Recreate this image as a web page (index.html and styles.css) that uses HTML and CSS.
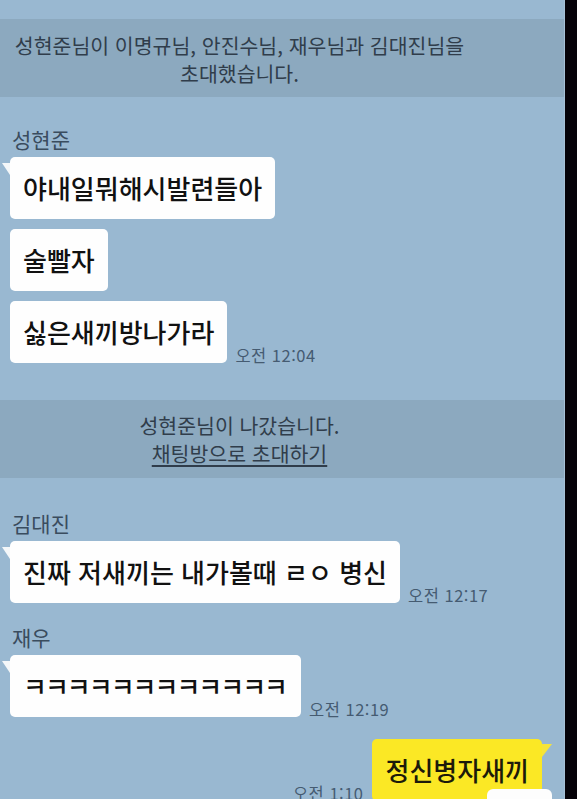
FILE: index.html
```html
<!DOCTYPE html>
<html lang="ko">
<head>
<meta charset="utf-8">
<title>채팅</title>
<link rel="stylesheet" href="styles.css">
</head>
<body>
<div class="screen">
  <main class="chat">
    <div class="notice n1"><p>성현준님이 이명규님, 안진수님, 재우님과 김대진님을<br>초대했습니다.</p></div>

    <section class="group g1">
      <div class="name">성현준</div>
      <div class="row"><div class="bubble tail">야내일뭐해시발련들아</div></div>
      <div class="row"><div class="bubble">술빨자</div></div>
      <div class="row"><div class="bubble">싫은새끼방나가라</div><span class="time">오전 12:04</span></div>
    </section>

    <div class="notice n2"><p>성현준님이 나갔습니다.<br><a class="invite">채팅방으로 초대하기</a></p></div>

    <section class="group g2">
      <div class="name">김대진</div>
      <div class="row"><div class="bubble tail">진짜 저새끼는 내가볼때 ㄹㅇ 병신</div><span class="time">오전 12:17</span></div>
    </section>

    <section class="group g3">
      <div class="name">재우</div>
      <div class="row"><div class="bubble tail narrow">ㅋㅋㅋㅋㅋㅋㅋㅋㅋㅋㅋㅋ</div><span class="time">오전 12:19</span></div>
    </section>

    <section class="group mine">
      <div class="row me"><span class="time">오전 1:10</span><div class="bubble yellow">정신병자새끼<span class="blot"></span></div></div>
    </section>
  </main>
  <div class="edge"></div>
</div>
</body>
</html>
```

FILE: styles.css
```css
html, body {
  margin: 0;
  padding: 0;
  height: 100%;
  overflow: hidden;
  background: #000;
}

.screen {
  display: grid;
  grid-template-columns: 565px 12px;
  height: 799px;
  overflow: hidden;
  font-family: "Noto Sans CJK KR", "Noto Sans", sans-serif;
}

.chat {
  background: #99b8d1;
  padding: 19px 0 0 0;
  border-right: 1px solid #a6c1d6;
  box-sizing: border-box;
  overflow: hidden;
}

.edge {
  background: #050208;
}

.notice {
  background: #8ca9bf;
  padding: 12px 85px 10px 0;
  text-align: center;
  color: #303d4b;
  font-size: 20.5px;
  line-height: 28px;
}

.notice p {
  margin: 0;
}

.n2 {
  margin-top: 37px;
  padding-top: 11px;
  padding-bottom: 11px;
}

.invite {
  color: #303d4b;
  text-decoration: underline;
  text-underline-offset: 3px;
}

.group {
  display: flex;
  flex-direction: column;
  gap: 10px;
  padding-left: 10px;
}

.g1 { margin-top: 30px; }
.g2 { margin-top: 33px; }
.g3 { margin-top: 22px; }
.mine { margin-top: 22px; }

.name {
  font-size: 21px;
  line-height: 24px;
  color: #3a4c5e;
  padding-left: 2px;
  margin-bottom: -4px;
}

.row {
  display: flex;
  align-items: flex-end;
  gap: 8px;
}

.row.me {
  justify-content: flex-end;
  padding-right: 22px;
  gap: 9px;
}

.bubble {
  position: relative;
  background: #fefefe;
  color: #111;
  font-size: 26px;
  font-weight: 500;
  line-height: 32px;
  padding: 15px 13px;
  border-radius: 5px;
  white-space: nowrap;
}

.bubble.tail::before {
  content: "";
  position: absolute;
  left: -8px;
  top: 6px;
  border-top: 12px solid #f4f7f9;
  border-left: 8px solid transparent;
}

.bubble.narrow {
  letter-spacing: -2px;
  padding-right: 15px;
}

.bubble.yellow {
  background: #fbe825;
  color: #1c1a0a;
}

.bubble.yellow::before {
  content: "";
  position: absolute;
  right: -10px;
  top: 5px;
  border-top: 13px solid #f6e43a;
  border-right: 10px solid transparent;
}

.blot {
  position: absolute;
  left: 115px;
  top: 50px;
  width: 65px;
  height: 24px;
  background: #fdfdfd;
  border-radius: 6px;
}

.time {
  font-size: 16.5px;
  line-height: 18px;
  letter-spacing: 0.5px;
  color: #455b71;
  margin-bottom: -1px;
  white-space: nowrap;
}
```
